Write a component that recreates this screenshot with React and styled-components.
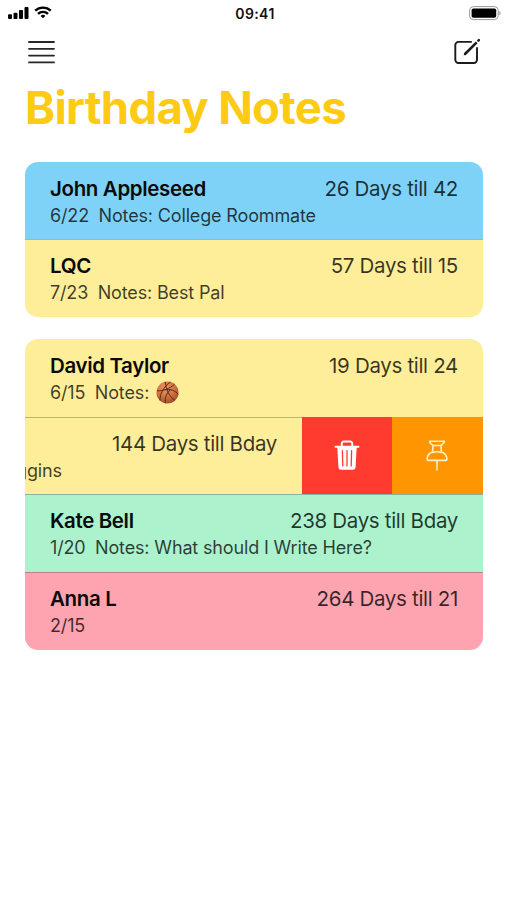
import React from 'react'
import styled, { createGlobalStyle } from 'styled-components'

const pinned = [
  { name: 'John Appleseed', date: '6/22', note: 'College Roommate', days: '26 Days till 42', color: '#7fd2f7' },
  { name: 'LQC', date: '7/23', note: 'Best Pal', days: '57 Days till 15', color: '#feed99' },
]

const upcoming = [
  { name: 'David Taylor', date: '6/15', ball: true, days: '19 Days till 24', color: '#feed99' },
  { swiped: true, tail: 'ggins', days: '144 Days till Bday', color: '#feed99' },
  { name: 'Kate Bell', date: '1/20', note: 'What should I Write Here?', days: '238 Days till Bday', color: '#abf2cd' },
  { name: 'Anna L', date: '2/15', days: '264 Days till 21', color: '#fea4b1' },
]

function SignalIcon() {
  return (
    <svg width="22" height="14" viewBox="0 0 22 14">
      <rect x="0" y="8.3" width="4" height="4.8" rx="1" />
      <rect x="5.5" y="6.7" width="4" height="6.4" rx="1" />
      <rect x="11" y="4" width="4" height="9.1" rx="1" />
      <rect x="16.5" y="1" width="4" height="12.1" rx="1" />
    </svg>
  )
}

function WifiIcon() {
  return (
    <svg width="18" height="14" viewBox="0 0 18 14" fill="none" stroke="#000" strokeWidth="2.3">
      <path d="M1.2 4.7a11.2 11.2 0 0 1 15.6 0" />
      <path d="M4 7.9a7.2 7.2 0 0 1 10 0" />
      <path d="M9 12.3 6.6 9.9a3.5 3.5 0 0 1 4.8 0z" fill="#000" stroke="none" />
    </svg>
  )
}

function BatteryIcon() {
  return (
    <svg width="33" height="15" viewBox="0 0 33 15">
      <rect x="0.6" y="0.6" width="28.6" height="13" rx="3.8" fill="#fff" stroke="#999" strokeWidth="1" />
      <rect x="2.6" y="2.5" width="24.6" height="9.2" rx="1.8" />
      <path d="M30.4 5v4.2c1.5-.6 1.5-3.6 0-4.2z" fill="#888" />
    </svg>
  )
}

function MenuIcon() {
  return (
    <svg width="28" height="26" viewBox="0 0 28 26" stroke="#262626" strokeWidth="1.8" strokeLinecap="round">
      <path d="M2 3h25M2 9.8h25M2 16.6h25M2 23.4h25" />
    </svg>
  )
}

function ComposeIcon() {
  return (
    <svg width="28" height="28" viewBox="0 0 28 28" fill="none" stroke="#1b1b1b">
      <path d="M18.8 3.9H5.5a3.2 3.2 0 0 0-3.2 3.2v14.7a3.2 3.2 0 0 0 3.2 3.2h15.3a3.2 3.2 0 0 0 3.2-3.2V9.2" strokeWidth="1.9" />
      <path d="M11.5 16.5 23.7 4.3" strokeWidth="2.5" />
      <path d="m10.6 17.5 2.4-1-1.4-1.400z" fill="#1b1b1b" stroke="none" />
      <path d="m25.3 2.7.6-.6" strokeWidth="2.4" strokeLinecap="round" />
    </svg>
  )
}

function TrashIcon() {
  return (
    <svg width="26" height="31" viewBox="0 0 26 31" fill="none" stroke="#fff">
      <path d="M7.8 6V3.5A1.9 1.9 0 0 1 9.7 1.6h6.6A1.9 1.9 0 0 1 18.2 3.5V6" strokeWidth="2" />
      <path d="M1.5 6.7h23" strokeWidth="2" strokeLinecap="round" />
      <path d="M3.3 7h19.4l-1.1 20.2a2.7 2.7 0 0 1-2.7 2.5H7.1a2.7 2.7 0 0 1-2.7-2.5z" fill="#fff" stroke="none" />
      <path d="m8.4 10.6.4 15.3M13 10.6v15.3M17.6 10.6l-.4 15.3" stroke="#ff3b30" strokeWidth="1.3" strokeLinecap="round" />
    </svg>
  )
}

function PinIcon() {
  return (
    <svg width="22" height="31" viewBox="0 0 22 31" fill="none" stroke="#fff0c4" strokeWidth="1.6" strokeLinejoin="round" strokeLinecap="round">
      <path d="M3.6 1.2h14.8c.2 1.8-1.8 3.1-3.5 4.3l.5 6.2c3.2 1.4 5.5 4.4 5.5 7.5 0 .8-.4 1.200-1.200 1.200H2.300c-.8 0-1.200-.4-1.200-1.200 0-3.100 2.300-6.100 5.500-7.500l.5-6.200C5.400 4.300 3.400 3 3.600 1.200z" />
      <path d="M7.1 5.5h7.8M6.6 12.5c2.7-1 6.1-1 8.8 0M11 20.500V30" />
    </svg>
  )
}

function Basketball() {
  return (
    <svg width="23" height="23" viewBox="0 0 23 23" fill="none">
      <defs>
        <radialGradient id="leather" cx="0.42" cy="0.3" r="0.75">
          <stop offset="0" stopColor="#ee9763" />
          <stop offset="0.55" stopColor="#d27040" />
          <stop offset="1" stopColor="#96492a" />
        </radialGradient>
      </defs>
      <circle cx="11.5" cy="11.5" r="11" fill="url(#leather)" />
      <g stroke="#542b1c" strokeWidth="1">
        <path d="M1 9.8C7 10.2 14 7.5 18.5 3.2" />
        <path d="M9.3.8c.5 7 4 15 9.5 18.5" />
        <path d="M8.8 8.9C14.5 7.8 19.5 9.5 22.3 13.5" />
        <path d="M4 19.5C3.500 13.500 8 5 14.500 1" />
        <path d="M9.5 22.2c-1-5 1-10 5-13.700" />
      </g>
    </svg>
  )
}

function BirthdayRow({ item }) {
  if (item.swiped) {
    return (
      <Row $color={item.color}>
        <Shifted>
          <Days>{item.days}</Days>
          <Tail>{item.tail}</Tail>
        </Shifted>
        <Action $color="#ff3b30"><TrashIcon /></Action>
        <Action $color="#ff9500"><PinIcon /></Action>
      </Row>
    )
  }

  return (
    <Row $color={item.color}>
      <Details>
        <TopLine>
          <Name>{item.name}</Name>
          <Days>{item.days}</Days>
        </TopLine>
        <NoteLine>
          <span>{item.date}</span>
          {item.note && <span>Notes: {item.note}</span>}
          {item.ball && <BallNote>Notes: <Basketball /></BallNote>}
        </NoteLine>
      </Details>
    </Row>
  )
}

function App() {
  return (
    <>
      <GlobalStyle />
      <Screen>
        <StatusBar>
          <Signals><SignalIcon /><WifiIcon /></Signals>
          <Time>09:41</Time>
          <Battery><BatteryIcon /></Battery>
        </StatusBar>
        <Toolbar>
          <IconButton aria-label="Menu"><MenuIcon /></IconButton>
          <IconButton aria-label="New note"><ComposeIcon /></IconButton>
        </Toolbar>
        <Title>Birthday Notes</Title>
        <Group>
          {pinned.map((item) => <BirthdayRow key={item.days} item={item} />)}
        </Group>
        <Group>
          {upcoming.map((item) => <BirthdayRow key={item.days} item={item} />)}
        </Group>
      </Screen>
    </>
  )
}

export default App

const GlobalStyle = createGlobalStyle`
  * {
    box-sizing: border-box;
  }
  body {
    margin: 0;
    background: #fff;
    font-family: Inter, "Liberation Sans", sans-serif;
  }
  svg {
    display: block;
    flex: none;
  }
`;

const Screen = styled.main`
  width: 507px;
  height: 900px;
  overflow: hidden;
  background: #fff;
`;

const StatusBar = styled.header`
  display: grid;
  grid-template-columns: 1fr auto 1fr;
  align-items: center;
  height: 26px;
  padding: 0 5px 0 8px;
`;

const Signals = styled.div`
  display: flex;
  gap: 4px;
`;

const Time = styled.div`
  font-size: 14px;
  font-weight: 600;
  letter-spacing: 0.4px;
  color: #111;
`;

const Battery = styled.div`
  display: flex;
  justify-content: flex-end;
`;

const Toolbar = styled.nav`
  display: flex;
  justify-content: space-between;
  height: 54px;
  padding: 10px 26px 0 27px;
`;

const IconButton = styled.button`
  display: flex;
  align-items: center;
  height: 32px;
  padding: 0;
  border: none;
  background: none;
`;

const Title = styled.h1`
  margin: 0 0 26.6px 25px;
  height: 55px;
  line-height: 55px;
  font-size: 45.5px;
  font-weight: 700;
  letter-spacing: -0.7px;
  color: #fdca14;
  white-space: nowrap;
`;

const Group = styled.section`
  width: 457.6px;
  margin: 0 0 22px 25px;
  border-radius: 13px;
  overflow: hidden;
`;

const Row = styled.article`
  display: flex;
  height: 77.7px;
  background: ${props => props.$color};
  white-space: nowrap;
  & + & {
    box-shadow: inset 0 1px rgba(70, 70, 60, 0.35);
  }
`;

const Details = styled.div`
  flex: 1;
  padding: 13px 24.6px 0 25px;
`;

const TopLine = styled.div`
  display: flex;
  justify-content: space-between;
  height: 28px;
  line-height: 28px;
`;

const Name = styled.div`
  font-size: 20.5px;
  font-weight: 600;
  letter-spacing: -0.36px;
  color: #0a0a0a;
`;

const Days = styled.div`
  font-size: 20.5px;
  line-height: 28px;
  letter-spacing: -0.32px;
  color: rgba(0, 0, 0, 0.78);
`;

const NoteLine = styled.div`
  display: flex;
  gap: 9.5px;
  height: 26px;
  line-height: 26px;
  font-size: 18px;
  letter-spacing: -0.15px;
  color: rgba(0, 0, 0, 0.75);
`;

const BallNote = styled.span`
  display: flex;
  align-items: center;
  gap: 7px;
`;

const Shifted = styled.div`
  display: flex;
  flex-direction: column;
  align-items: flex-end;
  width: 276.6px;
  padding: 13px 24.6px 0 0;
  overflow: hidden;
`;

// the swiped row's note has slid out past the card's left edge
const Tail = styled.div`
  align-self: flex-start;
  margin-left: -9px;
  line-height: 26px;
  font-size: 18px;
  letter-spacing: -0.15px;
  color: rgba(0, 0, 0, 0.75);
`;

const Action = styled.div`
  display: flex;
  flex: 1;
  align-items: center;
  justify-content: center;
  background: ${props => props.$color};
`;
